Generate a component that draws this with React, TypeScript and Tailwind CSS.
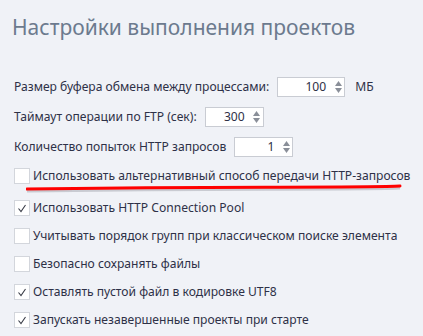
import { ReactNode } from "react";

function Spin({ value, width }: { value: string; width: string }) {
  return (
    <div className={`flex h-[20px] items-center border border-[#c9ccd3] bg-white ${width}`}>
      <span className="flex-1 pr-[6px] text-right">{value}</span>
      <span className="flex w-[12px] flex-col items-center leading-none text-[#8a8f99]">
        <svg width="7" height="5" viewBox="0 0 7 5"><path d="M0 5 L3.5 0 L7 5Z" fill="currentColor" /></svg>
        <svg width="7" height="5" viewBox="0 0 7 5" className="mt-[2px]"><path d="M0 0 L3.5 5 L7 0Z" fill="currentColor" /></svg>
      </span>
    </div>
  );
}

function Check({ checked, children }: { checked?: boolean; children: ReactNode }) {
  return (
    <div className="flex h-[28px] items-center gap-[3px] whitespace-nowrap">
      <span className="flex h-[16px] w-[16px] shrink-0 items-center justify-center border border-[#d3d6dc] bg-white">
        {checked && (
          <svg width="10" height="9" viewBox="0 0 10 9">
            <path d="M1.5 4.5 L4 7.5 L8.5 1" fill="none" stroke="#3a3d48" strokeWidth="1.1" />
          </svg>
        )}
      </span>
      <span>{children}</span>
    </div>
  );
}

export default function App() {
  return (
    <div className="h-[336px] w-[423px] overflow-hidden bg-[#f0f2f7] font-['Noto_Sans',sans-serif] text-[12.1px] text-[#2e3147]">
      {/* Header */}
      <h1 className="whitespace-nowrap px-[12px] pt-[12px] text-[21px] font-normal leading-[30px] text-[#6c7a8e]">
        Настройки выполнения проектов
      </h1>

      {/* Numeric settings */}
      <div className="mt-[35px] flex flex-col gap-[10px] whitespace-nowrap px-[14px]">
        <div className="flex items-center gap-[8px]">
          <span>Размер буфера обмена между процессами:</span>
          <Spin value="100" width="w-[68px]" />
          <span className="ml-[2px]">МБ</span>
        </div>
        <div className="flex items-center gap-[8px]">
          <span>Таймаут операции по FTP (сек):</span>
          <Spin value="300" width="w-[59px]" />
        </div>
        <div className="flex items-center gap-[8px]">
          <span>Количество попыток HTTP запросов</span>
          <Spin value="1" width="w-[59px]" />
        </div>
      </div>

      {/* Checkboxes */}
      <div className="relative mt-[5px] px-[14px]">
        <Check>Использовать альтернативный способ передачи HTTP-запросов</Check>
        <svg className="absolute left-[26px] top-[22px]" width="380" height="10" viewBox="0 0 380 10">
          <path d="M1 7 Q 120 5.5 240 5.2 T 374 4" fill="none" stroke="#9a9ca3" strokeOpacity="0.45" strokeWidth="3" />
          <path d="M1 5 Q 120 3.5 240 3.2 T 374 2" fill="none" stroke="#ff0000" strokeWidth="3" strokeLinecap="round" />
        </svg>
        <div className="mt-[4px]">
          <Check checked>Использовать HTTP Connection Pool</Check>
          <Check>Учитывать порядок групп при классическом поиске элемента</Check>
          <Check>Безопасно сохранять файлы</Check>
          <Check checked>Оставлять пустой файл в кодировке UTF8</Check>
          <Check checked>Запускать незавершенные проекты при старте</Check>
        </div>
      </div>
    </div>
  );
}
